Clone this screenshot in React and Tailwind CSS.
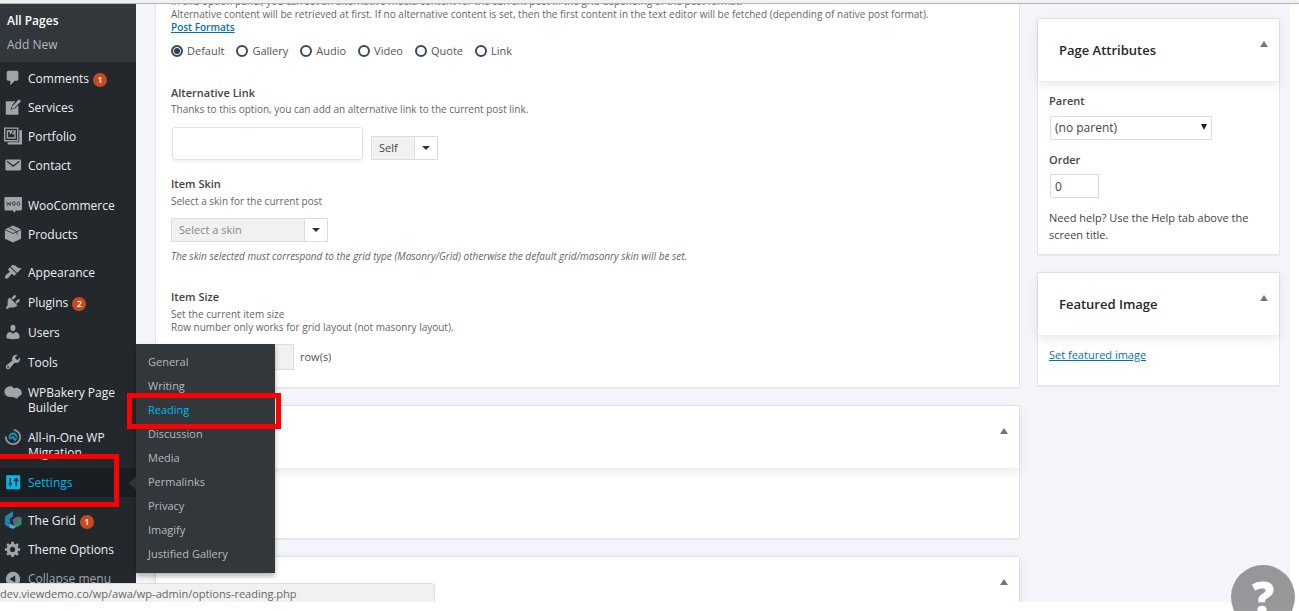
const ICONS = {
  comments: <path d="M5 2h9c1.1 0 2 .9 2 2v7c0 1.1-.9 2-2 2h-2l-5 5v-5H5c-1.1 0-2-.9-2-2V4c0-1.1.9-2 2-2z" />,
  services: (
    <>
      <path d="M2 3.500h10.500L9 8l-1.500 5 5-1.500L16 8v10.500H2z" />
      <path d="M16.500 1.500l2.500 2.200-7.800 7.600-2.600.7.600-2.700z" />
    </>
  ),
  portfolio: (
    <>
      <path d="M0 .5h16v15.500H0zM1.500 2v12.500h13V2z" fillRule="evenodd" />
      <path d="M17 3.500h3v16H4V17h13z" />
      <path d="M3 3.500h10v9.500H3zM4.500 11.500h7V7l-1.500 1.500-1.500-2L6.500 9V5.500h-2zM9 4.500v2h1.500v-2z" fillRule="evenodd" />
    </>
  ),
  contact: (
    <path d="M3 4h14.500c.8 0 1.500.7 1.500 1.500v9c0 .8-.7 1.500-1.500 1.500H3c-.8 0-1.500-.7-1.500-1.500v-9C1.500 4.700 2.200 4 3 4zm.3 1.600c-.4.4-.2.800.2 1.200l6.700 5.400 6.800-5.400c.4-.4.600-.8.200-1.200-.3-.3-.8-.2-1.200.1l-5.800 4.600-5.700-4.600c-.4-.3-.9-.4-1.200-.1z" fillRule="evenodd" />
  ),
  woo: (
    <>
      <path d="M2 1h16.500c1 0 1.500.6 1.500 1.500v12c0 1-.5 1.500-1.500 1.500H13l-1 2.500L9.500 16H2c-1 0-1.500-.6-1.500-1.500v-12C.5 1.600 1 1 2 1z" />
      <path d="M3 6.500l1 4 1.500-3 1.300 3 1-4M12.500 8.500a1.500 2 0 1 1-3 0 1.500 2 0 0 1 3 0zM17.500 8.500a1.500 2 0 1 1-3 0 1.500 2 0 0 1 3 0z" fill="none" stroke="#3c4247" strokeWidth="1.100" />
    </>
  ),
  products: (
    <>
      <path d="M10 .5l9 4.200v10.600l-9 4.200-9-4.200V4.700z" />
      <path d="M1 5l9 4.500L19 5M5.500 2.800l9 4.700v3" fill="none" stroke="#23282d" strokeWidth=".9" />
    </>
  ),
  appearance: (
    <path d="M14.480 11.060L7.410 3.990l1.500-1.500c.5-.56 2.300-.47 3.510.32 1.210.8 1.430 1.280 2.910 2.100 1.180.64 2.450 1.260 4.450.85zm-.71.71L6.700 4.700 4.930 6.470c-.39.39-.39 1.020 0 1.410l1.060 1.060c.39.39.39 1.030 0 1.420-.6.6-1.430 1.110-2.210 1.690-.35.26-.7.53-1.010.84C1.430 14.230.4 16.080 1.400 17.070c.99 1 2.840-.03 4.180-1.360.31-.31.58-.66.85-1.020.57-.78 1.080-1.610 1.690-2.210.39-.39 1.020-.39 1.410 0l1.060 1.060c.39.39 1.020.39 1.410 0z" />
  ),
  plugins: (
    <path d="M13.110 4.360L9.870 7.600 8 5.730l3.240-3.240c.35-.34 1.050-.2 1.560.32.52.51.66 1.210.31 1.550zm-8 1.770l.91-1.120 9.010 9.010-1.190.84c-.71.71-2.630 1.160-3.820 1.160H6.140L4.900 17.260c-.59.59-1.540.59-2.120 0-.59-.58-.59-1.530 0-2.120l1.240-1.240v-3.880c0-1.130.4-3.190 1.090-3.890zm7.260 3.970l3.240-3.240c.34-.35 1.040-.21 1.550.31.52.51.66 1.210.31 1.550l-3.240 3.250z" />
  ),
  users: (
    <path d="M10 9.250c-2.270 0-2.730-3.440-2.730-3.440C7 4.020 7.820 2 9.970 2c2.160 0 2.980 2.020 2.710 3.810 0 0-.41 3.440-2.680 3.440zm0 2.570L12.720 10c2.390 0 4.520 2.330 4.520 4.530v2.490s-3.650 1.130-7.240 1.130c-3.650 0-7.240-1.130-7.240-1.130v-2.490c0-2.250 1.940-4.480 4.470-4.480z" />
  ),
  tools: (
    <path d="M16.680 9.770c-1.340 1.340-3.300 1.670-4.950.99l-5.410 6.520c-.99.99-2.590.99-3.580 0s-.99-2.590 0-3.570l6.520-5.420c-.68-1.650-.35-3.610.99-4.950 1.280-1.280 3.120-1.620 4.720-1.060l-2.890 2.890 2.820 2.820 2.860-2.870c.53 1.580.18 3.390-1.080 4.650zM3.810 16.210c.4.39 1.040.39 1.430 0 .4-.4.4-1.040 0-1.430-.39-.4-1.030-.4-1.430 0-.39.39-.39 1.030 0 1.430z" />
  ),
  bakery: (
    <path d="M5.500 4C8 3.200 10 4.300 10.800 6c1.500-.8 3.500-1 5-.3 2.500.8 4.200 2.900 4 5.300-.2 2.200-1.700 3.500-3.500 3.700-.5 1.800-2 2.800-3.500 2.600l-.6-1.600c-1.300.7-2.600.5-3.500-.4C5.500 16 2.500 15 1.200 12.500-.8 9 1.500 5 5.500 4z" />
  ),
  migration: (
    <>
      <path d="M11 2a8 8 0 1 1-9 7.500" fill="none" stroke="#8f979d" strokeWidth="2" />
      <path d="M6.500 12a4 4 0 1 1 7.500-1.500M8 12.500a2.200 2.200 0 0 1 3.500-2" fill="none" stroke="#1d94c4" strokeWidth="2" />
      <path d="M9.500 11.500h5.500l-3 3.500z" fill="#1d94c4" />
    </>
  ),
  settings: (
    <>
      <path d="M2.500 2.500h15.500v15.500H2.500z" />
      <path d="M7 5.500v6M5 12h4M7 13v2M13.500 15V8M11 9l2.500-3L16 9" fill="none" stroke="#191e23" strokeWidth="1.500" />
    </>
  ),
  grid: (
    <>
      <path d="M10 0v6L6.500 8.500v5.500l3 2-3 3L1 15V6z" fill="#1c86b0" />
      <path d="M6.500 14l4 2.500 4-2.500v3l-4.500 3-3.500-1.500z" fill="#5ba5dc" />
      <path d="M14.500 10l5-3v8l-5 3-4-2.500z" fill="#2f8f5b" />
      <path d="M9.500 9.500L15 6l4.500 1-9 8.500z" fill="#6d5a83" />
    </>
  ),
  options: (
    <path d="M18 12h-2.180c-.17.7-.44 1.350-.81 1.930l1.540 1.540-2.100 2.100-1.540-1.540c-.58.36-1.230.63-1.910.79V19H8v-2.180c-.68-.16-1.330-.43-1.910-.79l-1.540 1.540-2.120-2.120 1.540-1.540c-.36-.58-.63-1.230-.79-1.910H1V9.030h2.170c.16-.7.44-1.350.8-1.940L2.430 5.550l2.100-2.100 1.540 1.540c.58-.37 1.240-.64 1.930-.81V2h3v2.180c.68.16 1.330.43 1.910.79l1.540-1.540 2.120 2.120-1.540 1.540c.36.59.64 1.240.8 1.940H18V12zm-8.500 1.500c1.660 0 3-1.340 3-3s-1.340-3-3-3-3 1.340-3 3 1.340 3 3 3z" />
  ),
  collapse: <path d="M10 2a8 8 0 1 1 0 16 8 8 0 0 1 0-16zm2.500 4L6 10l6.500 4z" fillRule="evenodd" />,
};

const GROUPS = [
  {
    gap: "pt-0.5",
    items: [
      { icon: "comments", label: "Comments", count: 1 },
      { icon: "services", label: "Services" },
      { icon: "portfolio", label: "Portfolio" },
      { icon: "contact", label: "Contact" },
    ],
  },
  {
    gap: "pt-[11px]",
    items: [
      { icon: "woo", label: "WooCommerce" },
      { icon: "products", label: "Products" },
    ],
  },
  {
    gap: "flex flex-col gap-px pt-[9px]",
    items: [
      { icon: "appearance", label: "Appearance" },
      { icon: "plugins", label: "Plugins", count: 2 },
      { icon: "users", label: "Users" },
      { icon: "tools", label: "Tools" },
      { icon: "bakery", label: "WPBakery Page Builder" },
      { icon: "migration", label: "All-in-One WP Migration" },
      { icon: "settings", label: "Settings", current: true },
    ],
  },
  {
    gap: "pt-[9px]",
    items: [
      { icon: "grid", label: "The Grid", count: 1 },
      { icon: "options", label: "Theme Options" },
    ],
  },
];

const SUBMENU = ["General", "Writing", "Reading", "Discussion", "Media", "Permalinks", "Privacy", "Imagify", "Justified Gallery"];
const FORMATS = ["Default", "Gallery", "Audio", "Video", "Quote", "Link"];

function Icon({ name }) {
  return (
    <svg viewBox="0 0 20 20" className="-my-0.5 size-[18px] shrink-0 fill-current" aria-hidden="true">
      {ICONS[name]}
    </svg>
  );
}

function MenuItem({ item }) {
  return (
    <li className={item.current ? "relative bg-[#191e23] text-[#00b9eb]" : "relative text-[#a0a5aa]"}>
      <a href="#" className="flex gap-1.5 py-[7px] pl-1">
        <Icon name={item.icon} />
        <span className={item.current ? "w-[92px] text-[12px] leading-[15px]" : "w-[92px] text-[12px] leading-[15px] text-[#eee]"}>
          {item.label}
          {item.count && (
            <span className="-my-1 ml-1 inline-block size-[14px] rounded-full bg-[#ca4a1f] text-center align-middle text-[9px] leading-[14px] font-semibold text-white">
              {item.count}
            </span>
          )}
        </span>
      </a>
      {item.current && (
        <span className="absolute top-2 right-0 border-y-[7px] border-r-[7px] border-y-transparent border-r-[#32373c]" />
      )}
    </li>
  );
}

function Sidebar() {
  return (
    <nav className="w-[136px] shrink-0 overflow-hidden bg-[#23282d]">
      <div className="flex h-[58px] flex-col gap-2 bg-[#32373c] pt-[9px] pl-[7px] text-[12px] leading-4">
        <a href="#" className="font-semibold text-white">All Pages</a>
        <a href="#" className="text-[#b4b9be]">Add New</a>
      </div>
      {GROUPS.map((g) => (
        <ul key={g.items[0].label} className={g.gap}>
          {g.items.map((item) => (
            <MenuItem key={item.label} item={item} />
          ))}
        </ul>
      ))}
      <button className="flex items-center gap-1.5 py-[7px] pl-1 text-[12px] leading-4 text-[#a0a5aa]">
        <Icon name="collapse" />
        Collapse menu
      </button>
    </nav>
  );
}

function Heading({ children }) {
  return (
    <header className="flex h-[63px] justify-between border-b border-[#eee] pr-[11px] pl-[21px] shadow-[0_3px_10px_rgba(0,0,0,0.09)]">
      <h2 className="self-center text-[13px] leading-5 font-semibold text-[#23282d]">{children}</h2>
      <button aria-label="Toggle panel" className="mt-5 h-[10px]">
        <svg viewBox="0 0 8 6" className="h-1.5 w-2 fill-[#72777c]">
          <path d="M4 0l4 6H0z" />
        </svg>
      </button>
    </header>
  );
}

function DropDown({ label, width, tone, options }) {
  return (
    <div className={`relative h-6 border border-[#ddd] bg-[#f1f1f1] ${width}`}>
      <select aria-label={label} className={`block h-full w-full appearance-none pl-[7px] text-[11px] ${tone}`}>
        {options.map((o) => (
          <option key={o}>{o}</option>
        ))}
      </select>
      <span className="pointer-events-none absolute inset-y-0 right-0 flex w-[23px] items-center justify-center border-l border-[#ddd] bg-white">
        <svg viewBox="0 0 8 4" className="h-1 w-2 fill-[#333]">
          <path d="M0 0h8L4 4z" />
        </svg>
      </span>
    </div>
  );
}

const CARD = "border border-[#e5e5e5] bg-white shadow-[0_1px_1px_rgba(0,0,0,0.04)]";
const DESC = "text-[10px] leading-[13px] text-[#666]";
const LABEL = "text-[11px] leading-4 font-semibold text-[#444]";

function Main() {
  return (
    <main className="flex min-w-0 flex-1 flex-col gap-[17px]">
      <section className={`-mt-2.5 px-[15px] pb-[17px] ${CARD}`}>
        <p className={DESC}>
          In this option panel, you can set an alternative media content for the current post in the grid depending of the post format.
          <br />
          Alternative content will be retrieved at first. If no alternative content is set, then the first content in the text editor will be fetched (depending of native post format).
          <br />
          <a href="#" className="font-semibold text-[#0073aa] underline">Post Formats</a>
        </p>
        <div className="mt-2.5 flex gap-3">
          {FORMATS.map((f, i) => (
            <label key={f} className="flex items-center gap-1 text-[11px] leading-[14px] text-[#555]">
              <input
                type="radio"
                name="format"
                defaultChecked={i === 0}
                className="size-3 appearance-none rounded-full border-2 border-[#3a4a5e] bg-white checked:bg-[#2e3f53] checked:shadow-[inset_0_0_0_1px_#fff]"
              />
              {f}
            </label>
          ))}
        </div>

        <h3 className={`mt-[27px] ${LABEL}`}><label htmlFor="alt">Alternative Link</label></h3>
        <p className={`mt-0.5 ${DESC}`}>Thanks to this option, you can add an alternative link to the current post link.</p>
        <div className="mt-[11px] flex items-end gap-2">
          <input id="alt" type="text" className="ml-px h-[33px] w-[191px] rounded-[3px] border border-[#e2e2e2] px-2 text-[11px] shadow-[0_2px_3px_rgba(0,0,0,0.06)]" />
          <DropDown label="Link target" width="w-[67px]" tone="text-[#444]" options={["Self", "Blank"]} />
        </div>

        <h3 className={`mt-4 ${LABEL}`}>Item Skin</h3>
        <p className={`mt-[3px] ${DESC}`}>Select a skin for the current post</p>
        <div className="mt-2.5">
          <DropDown label="Item Skin" width="w-[157px]" tone="text-[#888]" options={["Select a skin"]} />
        </div>
        <p className={`mt-2 italic ${DESC}`}>
          The skin selected must correspond to the grid type (Masonry/Grid) otherwise the default grid/masonry skin will be set.
        </p>

        <h3 className={`mt-[26px] ${LABEL}`}>Item Size</h3>
        <p className={`mt-[3px] ${DESC}`}>
          Set the current item size
          <br />
          Row number only works for grid layout (not masonry layout).
        </p>
        <label className="mt-2.5 flex items-center gap-1.5 text-[11px] text-[#555]">
          <input type="text" className="h-[26px] w-[123px] border border-[#ddd] bg-[#f1f1f1] px-2" />
          row(s)
        </label>
      </section>
      <section className={`h-[134px] shrink-0 ${CARD}`}>
        <Heading />
      </section>
      <section className={`h-[134px] shrink-0 ${CARD}`}>
        <Heading>Custom Code</Heading>
      </section>
    </main>
  );
}

function Aside() {
  return (
    <aside className="mt-3.5 flex w-[243px] shrink-0 flex-col gap-[17px] text-[11px] text-[#444]">
      <section className={`pb-[11px] ${CARD}`}>
        <Heading>Page Attributes</Heading>
        <div className="flex flex-col items-start px-[11px] pt-[11px] leading-4">
          <label htmlFor="parent" className="font-semibold">Parent</label>
          <div className="relative mt-[7px] ml-px">
            <select id="parent" className="block h-6 w-[162px] appearance-none border border-[#ddd] bg-white pl-1 text-[12px] text-[#444]">
              <option>(no parent)</option>
            </select>
            <svg viewBox="0 0 6 6" className="pointer-events-none absolute top-2 right-[5px] size-1.5 fill-[#222]">
              <path d="M0 0h6L3 6z" />
            </svg>
          </div>
          <label htmlFor="order" className="mt-3 font-semibold">Order</label>
          <input id="order" type="text" defaultValue="0" className="mt-1.5 ml-px h-6 w-[49px] border border-[#ddd] px-1 text-[12px] text-[#444]" />
          <p className="mt-[11px] leading-[17px]">Need help? Use the Help tab above the screen title.</p>
        </div>
      </section>
      <section className={`pb-[22px] ${CARD}`}>
        <Heading>Featured Image</Heading>
        <p className="px-[11px] pt-[11px] leading-4">
          <a href="#" className="text-[#0073aa] underline">Set featured image</a>
        </p>
      </section>
    </aside>
  );
}

export default function App() {
  return (
    <div className="relative flex h-screen flex-col overflow-hidden bg-white pr-[9px] pb-[9px] font-['Open_Sans','Noto_Sans',sans-serif]">
      <div className="-mr-[9px] h-1 shrink-0 border-b border-[#b4b4b8] bg-[#f1f1f1]" />
      <div className="flex min-h-0 flex-1 overflow-hidden bg-[#f4f5fb]">
        <Sidebar />
        <div className="flex min-w-0 flex-1 items-start gap-[17px] pr-2.5 pl-[19px]">
          <Main />
          <Aside />
        </div>
      </div>

      <ul className="absolute top-[344px] left-[136px] w-[139px] bg-[#32373c] pt-1.5 pb-[7px] text-[11px] leading-6 text-[#b4b9be] shadow-[0_3px_5px_rgba(0,0,0,0.3)]">
        {SUBMENU.map((s) => (
          <li key={s}>
            <a href="#" className={s === "Reading" ? "block pl-3 text-[#00b9eb]" : "block pl-3"}>{s}</a>
          </li>
        ))}
      </ul>
      <div className="pointer-events-none absolute top-[393px] left-[127px] h-9 w-[154px] border-[5px] border-[#fe0000]" />
      <div className="pointer-events-none absolute top-[454px] left-0 h-[53px] w-[119px] border-y-[5px] border-r-[5px] border-[#fe0000]" />

      <div className="absolute bottom-[9px] left-0 h-[19px] w-[435px] rounded-tr border-t border-r border-[#ddd] bg-[#f1f1f1] text-[11px] leading-5 text-[#666]">
        dev.viewdemo.co/wp/awa/wp-admin/options-reading.php
      </div>
      <button aria-label="Help" className="absolute right-1 -bottom-[18px] size-16 rounded-full bg-[#808082]/80 text-[44px] leading-[64px] font-extrabold text-white">
        ?
      </button>
    </div>
  );
}
